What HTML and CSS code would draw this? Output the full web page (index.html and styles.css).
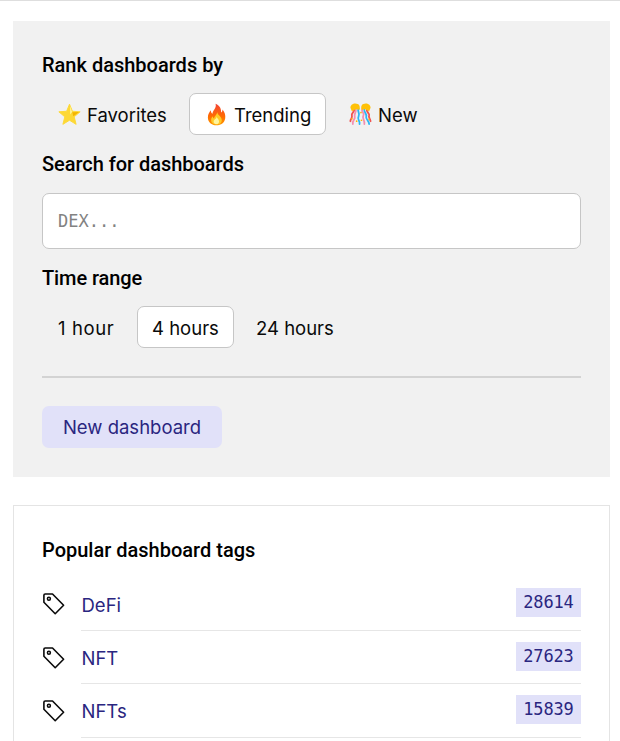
FILE: index.html
```html
<!DOCTYPE html>
<html lang="en">
<head>
<meta charset="utf-8">
<title>Dashboards</title>
<link rel="stylesheet" href="styles.css">
</head>
<body>
<svg class="defs" width="0" height="0" aria-hidden="true">
  <symbol id="tag" viewBox="0 0 24 24"><path d="M1.9 3.2v7.1L13.2 21.700l8.400-8.400L10.500 2H3.200Q1.900 2 1.900 3.200Z" fill="none" stroke="currentColor" stroke-width="1.6" stroke-linejoin="round"/><circle cx="6.9" cy="6.800" r="1.500" fill="none" stroke="currentColor" stroke-width="1.5"/></symbol>
</svg>
<main class="page">
  <section class="filters">
    <h2 class="title">Rank dashboards by</h2>
    <nav class="pills">
      <a class="pill favorites"><svg class="emoji" viewBox="0 0 24 24"><path d="M12 1.200l3 7.400 8.100.6-6.200 5.200 2 7.900-6.900-4.300-6.900 4.300 2-7.900L.9 9.200l8.100-.6z" fill="#fdd835" stroke="#fdd835" stroke-width="1" stroke-linejoin="round"/><path d="M12.600 3.200l2.100 6.100-2 2.600z" fill="#fff59d"/><path d="M14.900 9.600l7.200-.1-6.100 4.200z" fill="#f4b400"/></svg><span>Favorites</span></a>
      <a class="pill trending active"><svg class="emoji" viewBox="0 0 24 24"><defs><linearGradient id="flame" x1="0" y1="0" x2="0" y2="1"><stop offset="0" stop-color="#f44336"/><stop offset=".6" stop-color="#ff6d00"/><stop offset="1" stop-color="#ff9800"/></linearGradient></defs><path d="M11 .8c4.8 1.9 6 5.5 5.8 9.2 1.200-.6 1.500-2.100 1.500-3.200 2.500 3 3.200 6 2.800 9-.6 4.600-4.300 7.400-9.100 7.400-5.100 0-9-3.300-9-8.200 0-3 1.400-5.600 3.200-7.500-.1 2 .4 3.200 1.700 3.700C7.700 7.900 12.500 5.400 11 .8z" fill="url(#flame)"/><path d="M12.800 9c-.4 3 4.600 4.700 4.700 8.700.1 3-2.400 4.900-5.400 4.900s-5.700-1.800-5.700-4.800c0-2 .9-3.200 1.700-4 .1 1.300.5 2 1.400 2.300.2-2.800 2.900-3.400 3.300-7.100z" fill="#ffca28"/><path d="M12.200 14c0 2 2.500 2.800 2.500 5.200 0 1.700-1.100 2.800-2.700 2.800-1.800 0-3-1-3-2.800 0-2 3-2.200 3.200-5.200z" fill="#fff59d"/></svg><span>Trending</span></a>
      <a class="pill new"><svg class="emoji" viewBox="0 0 24 24"><g fill="none" stroke-width="1.9" stroke-linecap="round"><path d="M5 6c2 3-3 4-2 7s-2 4-1.500 6" stroke="#ef5350"/><path d="M7 6c1 4-2 5-1 8s-3 4-2 8" stroke="#f48fb1"/><path d="M10 6c-2 3 2 4 0 8s2 4 1 8" stroke="#29b6f6"/><path d="M14 6c-2 4 3 4 1 7s2 5 1 9" stroke="#f48fb1"/><path d="M16 6c-1 4 3 5 2 8s3 4 3 8" stroke="#29b6f6"/><path d="M19 6c-2 3 3 5 2 7s1 3 1.500 6" stroke="#ef5350"/></g><path d="M1.500 5C1.500 1 6-.5 9 1c2.500 1 2.500 3.500 2 6L7 6.500 3 8.500zM22.500 5C22.500 1 18-.5 15 1c-2.500 1-2.500 3.500-2 6l4-.5 4 2z" fill="#ffc107"/><g fill="#ffb300"><circle cx="3" cy="16.500" r=".9"/><circle cx="12.500" cy="10" r=".9"/><circle cx="13" cy="18" r=".9"/><circle cx="21" cy="17" r=".9"/><circle cx="8" cy="19" r=".9"/></g></svg><span>New</span></a>
    </nav>
    <h2 class="title search-title">Search for dashboards</h2>
    <input class="search" type="text" placeholder="DEX..." aria-label="Search for dashboards">
    <h2 class="title time-title">Time range</h2>
    <nav class="pills">
      <a class="pill hour"><span>1 hour</span></a>
      <a class="pill hours active"><span>4 hours</span></a>
      <a class="pill day"><span>24 hours</span></a>
    </nav>
    <hr class="rule">
    <a class="create"><span>New dashboard</span></a>
  </section>
  <section class="tags">
    <h2 class="title">Popular dashboard tags</h2>
    <ul class="list">
      <li class="item"><svg class="tag-icon"><use href="#tag"/></svg><div class="row"><a class="name">DeFi</a><span class="count">28614</span></div></li>
      <li class="item"><svg class="tag-icon"><use href="#tag"/></svg><div class="row"><a class="name">NFT</a><span class="count">27623</span></div></li>
      <li class="item"><svg class="tag-icon"><use href="#tag"/></svg><div class="row"><a class="name">NFTs</a><span class="count">15839</span></div></li>
    </ul>
  </section>
</main>
</body>
</html>
```
FILE: styles.css
```css
* { box-sizing: border-box; }
body {
  margin: 0;
  background: #fff;
  color: #0a0a0a;
  font-family: "Inter", "Liberation Sans", sans-serif;
  font-size: 18.500px;
}
.defs { display: block; }
.page {
  display: flex;
  flex-direction: column;
  height: 741px;
  border-top: 1px solid #dedede;
  padding: 20.400px 10px 0 13px;
}
.filters { flex: none; height: 455.600px; padding: 28.600px 29px; background: #f1f1f1; }
.title {
  margin: 0;
  height: 30px;
  font: 500 20px/30px "Roboto", sans-serif;
  color: #000;
  white-space: nowrap;
}
.search-title { letter-spacing: -.04px; }
.time-title { letter-spacing: -.1px; }
.pills { display: flex; height: 42px; margin: 13px 0 14px; gap: 7px; }
.pill {
  display: flex;
  align-items: center;
  padding: 2px 15px 0;
  border: 1px solid transparent;
  border-radius: 7px;
  white-space: nowrap;
}
.active { background: #fff; border-color: #c6c6c6; }
.emoji { width: 23px; height: 23px; margin-right: 6px; flex: none; }
.favorites { width: 140px; }
.trending { width: 137px; }
.new { width: 100px; }
.hour { width: 88px; letter-spacing: .6px; }
.hours { width: 97px; padding: 2px 14px 0; }
.day { width: 110px; padding-left: 14px; }
.search {
  display: block;
  width: 100%;
  height: 56px;
  margin: 14px 0;
  padding: 1px 15px 0;
  border: 1px solid #c6c6c6;
  border-radius: 7px;
  background: #fff;
  font: 17px "DejaVu Sans Mono", monospace;
}
.search::placeholder { color: #828282; opacity: 1; }
.rule { height: 2px; margin: 28px 0; border: 0; background: #d3d3d3; }
.create {
  display: flex;
  align-items: center;
  justify-content: center;
  width: 180px;
  height: 42px;
  border-radius: 7px;
  background: #e1e1f9;
  color: #2a2680;
  white-space: nowrap;
}
.tags {
  flex: 1;
  min-height: 0;
  margin-top: 28px;
  padding: 29px 28px 0;
  border: 1px solid #e4e4e4;
  border-bottom: 0;
}
.list { list-style: none; margin: 13px 0 0; padding: 0; }
.item { display: flex; height: 53.200px; }
.tag-icon { width: 24px; height: 24px; margin: 14.500px 15px 0 0; flex: none; }
.row {
  display: flex;
  flex: 1;
  align-items: flex-start;
  justify-content: space-between;
  border-bottom: 1px solid #e6e6e6;
}
.name { margin-top: 15px; padding-left: .5px; line-height: 24px; color: #2a2680; }
.count {
  width: 65px;
  height: 29px;
  margin-top: 10.500px;
  background: #e1e1f9;
  color: #2a2680;
  font: 17px/29px "DejaVu Sans Mono", monospace;
  text-align: center;
  letter-spacing: -.15px;
}
```
